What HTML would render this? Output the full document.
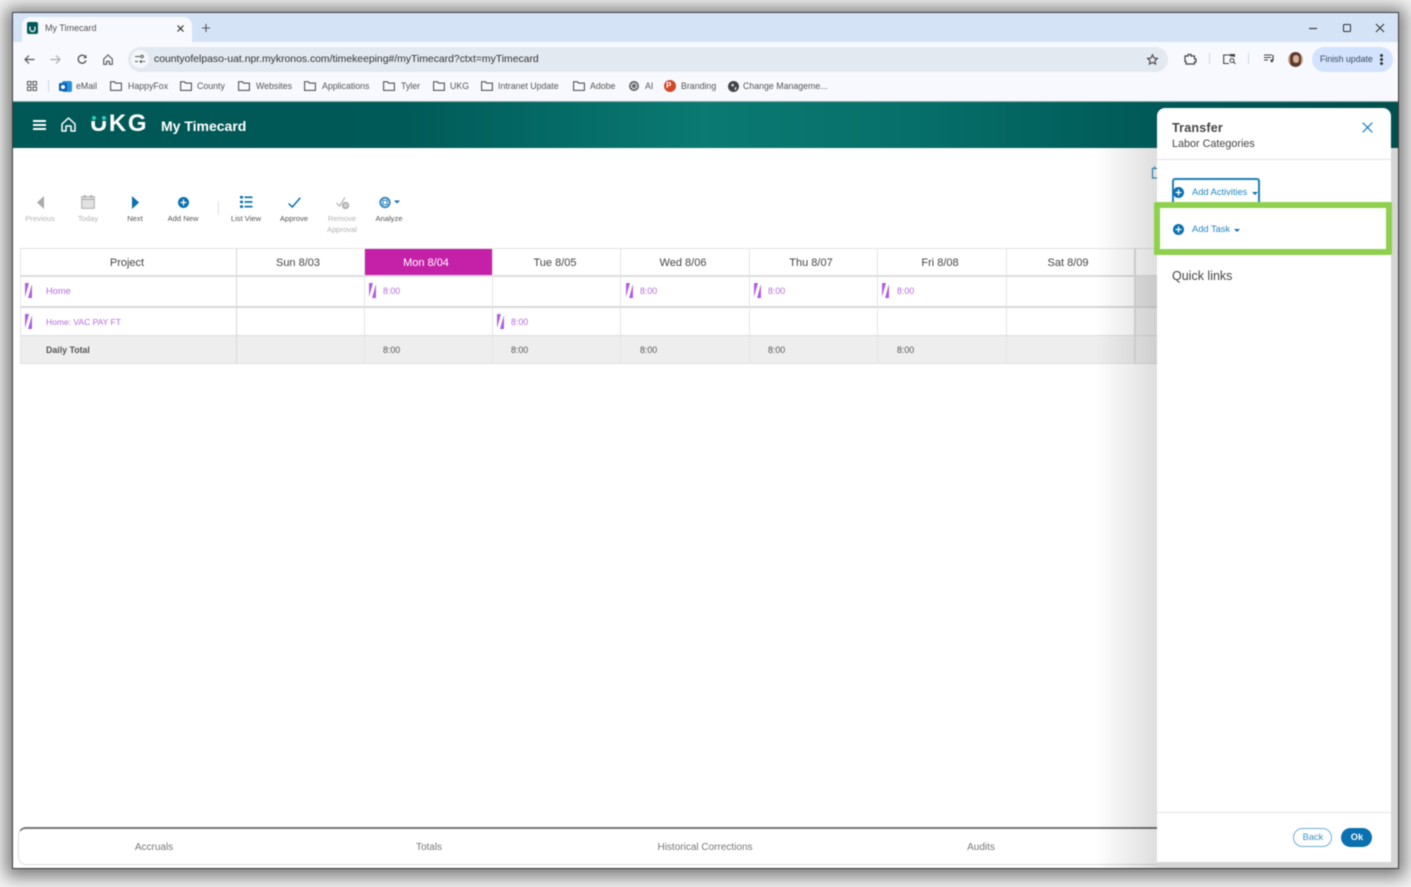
<!DOCTYPE html>
<html><head><meta charset="utf-8"><title>My Timecard</title>
<style>
html,body{margin:0;padding:0;width:1411px;height:887px;overflow:hidden;background:#f4f4f4;font-family:"Liberation Sans",sans-serif}
#win{position:absolute;left:13px;top:13px;width:1385px;height:855px;background:#fff;box-shadow:0 0 0 1px rgba(30,30,30,.75),0 2px 16px 7px rgba(0,0,0,.5);overflow:hidden}
#root{position:absolute;left:0;top:0;width:1411px;height:887px;filter:blur(.4px)}
.a{position:absolute}
.t{position:absolute;white-space:nowrap;line-height:14px;height:14px}
.c{transform:translateX(-50%)}
.bm{font-size:8.8px;color:#555;top:79px}
.tb{font-size:7.6px;color:#555;top:214px;line-height:10px;height:10px;text-align:center;transform:translateX(-50%)}
.dis{color:#b3b3b3}
.h{font-size:11px;color:#444;top:255.500px}
.p{font-size:8.8px;color:#b36be0}
.k{font-size:8.8px;color:#555;top:343px}
.v{background:#e4e4e4;width:1px}
svg{position:absolute;overflow:visible}
</style></head><body>
<div id="root">
<div id="win"></div>

<!-- Tab strip -->
<div class="a" style="left:13px;top:13px;width:1385px;height:29px;background:#d4e3f6"></div>
<div class="a" style="left:22px;top:17px;width:170px;height:25px;background:#f8f9fe;border-radius:8px 8px 0 0"></div>
<div class="a" style="left:27px;top:22px;width:11px;height:12px;background:#005a58;border-radius:2px"></div>
<svg style="left:27px;top:22px" width="11" height="12"><path d="M3 4.500v2.500a2.500 2.500 0 0 0 5 0V4.500" fill="none" stroke="#fff" stroke-width="1.200"/></svg>
<div class="t" style="left:45px;top:21px;font-size:9px;color:#555">My Timecard</div>
<svg style="left:177px;top:25px" width="7" height="7"><path d="M.5.500l6 6M6.500.500l-6 6" stroke="#333" stroke-width="1.200"/></svg>
<svg style="left:202px;top:24px" width="8" height="8"><path d="M4 0v8M0 4h8" stroke="#555" stroke-width="1.100"/></svg>
<svg style="left:1309px;top:28px" width="8" height="2"><path d="M0 .5h8" stroke="#333" stroke-width="1.100"/></svg>
<svg style="left:1343px;top:24px" width="8" height="8"><rect x=".5" y=".5" width="7" height="7" rx="1" fill="none" stroke="#333"/></svg>
<svg style="left:1376px;top:24px" width="8" height="8"><path d="M0 0l8 8M8 0l-8 8" stroke="#333" stroke-width="1"/></svg>

<!-- Toolbar -->
<div class="a" style="left:13px;top:42px;width:1385px;height:59px;background:#f8f9fe"></div>
<svg style="left:24px;top:54px" width="11" height="11"><path d="M10.500 5.500H1M5 1.500l-4 4 4 4" fill="none" stroke="#555" stroke-width="1.200"/></svg>
<svg style="left:50px;top:54px" width="11" height="11"><path d="M.5 5.500H10M6 1.500l4 4-4 4" fill="none" stroke="#aaa" stroke-width="1.200"/></svg>
<svg style="left:77px;top:54px" width="10" height="11"><path d="M8.700 3.200A4 4 0 1 0 9 6.500" fill="none" stroke="#555" stroke-width="1.300"/><path d="M9.500 .8v3.400H6.200z" fill="#555"/></svg>
<svg style="left:103px;top:54px" width="10" height="11"><path d="M.7 5L5 1l4.300 4v5.300H6.400V7.300H3.600v3H.7z" fill="none" stroke="#555" stroke-width="1.100"/></svg>
<div class="a" style="left:128px;top:47px;width:1040px;height:25px;background:#e3e9f0;border-radius:13px"></div>
<div class="a" style="left:131px;top:50px;width:18px;height:18px;background:#f4f7fa;border-radius:50%"></div>
<svg style="left:135px;top:55px" width="10" height="9"><path d="M0 1.500h5M0 6.500h3" stroke="#555" stroke-width="1"/><circle cx="7" cy="1.500" r="1.300" fill="none" stroke="#555"/><circle cx="6" cy="6.500" r="1.300" fill="#555"/><path d="M8 6.500h2" stroke="#555"/></svg>
<div class="t" style="left:154px;top:53px;font-size:10.400px;color:#333">countyofelpaso-uat.npr.mykronos.com/timekeeping#/myTimecard?ctxt=myTimecard</div>
<svg style="left:1147px;top:54px" width="11" height="11"><path d="M5.500 .8l1.500 3.200 3.400.4-2.500 2.300.7 3.400-3.100-1.700-3.100 1.700.7-3.400L.6 4.400 4 4z" fill="none" stroke="#444" stroke-width="1.100"/></svg>
<svg style="left:1184px;top:53px" width="12" height="12"><path d="M1 3h3V1.500h3V3h3.500v3H12v3h-1.500v2H2V8.500H1z" fill="none" stroke="#444" stroke-width="1.200"/></svg>
<div class="a" style="left:1209px;top:53px;width:1px;height:11px;background:#cbd8e6"></div>
<svg style="left:1223px;top:54px" width="13" height="11"><path d="M6 9.500H.7V1h10.500v2" fill="none" stroke="#444" stroke-width="1.100"/><rect x="7" y="0" width="5" height="2.500" fill="#444"/><circle cx="9" cy="6.500" r="2" fill="none" stroke="#444"/><path d="M10.500 8l2 2" stroke="#444"/></svg>
<div class="a" style="left:1248px;top:53px;width:1px;height:11px;background:#cbd8e6"></div>
<svg style="left:1264px;top:54px" width="11" height="9"><path d="M0 1h8M0 3.500h7M0 6h4" stroke="#444" stroke-width="1"/><path d="M9 1v5.500" stroke="#444" stroke-width="1.200"/><circle cx="7.800" cy="6.800" r="1.400" fill="#444"/></svg>
<div class="a" style="left:1288px;top:52px;width:15px;height:15px;border-radius:50%;background:#c9a48c;overflow:hidden"><div class="a" style="left:2px;top:0;width:11px;height:15px;background:#5a3a2e;border-radius:5px"></div><div class="a" style="left:4.500px;top:3px;width:6px;height:8px;background:#d7ae96;border-radius:3px"></div></div>
<div class="a" style="left:1312px;top:47px;width:81px;height:25px;background:#d3e3fd;border-radius:13px"></div>
<div class="t" style="left:1320px;top:52px;font-size:8.800px;color:#3c4a5a">Finish update</div>
<div class="a" style="left:1380px;top:54px;width:3px;height:3px;border-radius:50%;background:#333;box-shadow:0 4px 0 #333,0 8px 0 #333"></div>

<!-- Bookmarks -->
<svg style="left:27px;top:81px" width="10" height="10"><g fill="none" stroke="#555"><rect x=".5" y=".5" width="3.500" height="3.500"/><rect x="6" y=".5" width="3.500" height="3.500"/><rect x=".5" y="6" width="3.500" height="3.500"/><rect x="6" y="6" width="3.500" height="3.500"/></g></svg>
<div class="a" style="left:48px;top:80px;width:1px;height:12px;background:#cbd8e6"></div>
<div class="a" style="left:62px;top:81px;width:10px;height:11px;background:#2a8fdc;border-radius:2px"></div>
<div class="a" style="left:59px;top:83px;width:8px;height:8px;background:#0f5fae;border-radius:1px"></div>
<div class="a" style="left:61px;top:85px;width:4px;height:4px;background:#fff;border-radius:50%"></div>
<div class="t bm" style="left:76px">eMail</div>
<svg style="left:110px;top:81px" width="12" height="10"><path d="M.6 9.400V.8h3.900l1 1.300h5.900v7.300z" fill="none" stroke="#444" stroke-width="1"/></svg>
<div class="t bm" style="left:128px">HappyFox</div>
<svg style="left:180px;top:81px" width="12" height="10"><path d="M.6 9.400V.8h3.900l1 1.300h5.900v7.300z" fill="none" stroke="#444" stroke-width="1"/></svg>
<div class="t bm" style="left:197px">County</div>
<svg style="left:238px;top:81px" width="12" height="10"><path d="M.6 9.400V.8h3.900l1 1.300h5.900v7.300z" fill="none" stroke="#444" stroke-width="1"/></svg>
<div class="t bm" style="left:256px">Websites</div>
<svg style="left:304px;top:81px" width="12" height="10"><path d="M.6 9.400V.8h3.900l1 1.300h5.900v7.300z" fill="none" stroke="#444" stroke-width="1"/></svg>
<div class="t bm" style="left:322px">Applications</div>
<svg style="left:383px;top:81px" width="12" height="10"><path d="M.6 9.400V.8h3.900l1 1.300h5.900v7.300z" fill="none" stroke="#444" stroke-width="1"/></svg>
<div class="t bm" style="left:401px">Tyler</div>
<svg style="left:433px;top:81px" width="12" height="10"><path d="M.6 9.400V.8h3.900l1 1.300h5.900v7.300z" fill="none" stroke="#444" stroke-width="1"/></svg>
<div class="t bm" style="left:450px">UKG</div>
<svg style="left:481px;top:81px" width="12" height="10"><path d="M.6 9.400V.8h3.900l1 1.300h5.900v7.300z" fill="none" stroke="#444" stroke-width="1"/></svg>
<div class="t bm" style="left:498px">Intranet Update</div>
<svg style="left:573px;top:81px" width="12" height="10"><path d="M.6 9.400V.8h3.900l1 1.300h5.900v7.300z" fill="none" stroke="#444" stroke-width="1"/></svg>
<div class="t bm" style="left:590px">Adobe</div>
<svg style="left:629px;top:81px" width="10" height="10"><circle cx="5" cy="5" r="4.300" fill="none" stroke="#555" stroke-width="1.300"/><path d="M1 5h8M5 1v8M2.200 2.200l5.600 5.600M7.800 2.200L2.200 7.800" stroke="#555" stroke-width=".8"/></svg>
<div class="t bm" style="left:645px">AI</div>
<div class="a" style="left:664px;top:80px;width:12px;height:12px;border-radius:50%;background:#d24726"></div>
<div class="t" style="left:666px;top:79px;font-size:8px;font-weight:bold;color:#fff">P</div>
<div class="t bm" style="left:681px">Branding</div>
<div class="a" style="left:728px;top:81px;width:11px;height:11px;border-radius:50%;background:#444"></div>
<svg style="left:728px;top:81px" width="11" height="11"><path d="M5 2.500L3 4l1.500 1.500L6 5zM7 6.500l1.500-.5-.5 2.500-1.500.5z" fill="#eef"/></svg>
<div class="t bm" style="left:743px">Change Manageme...</div>

<!-- App header -->
<div class="a" style="left:13px;top:101px;width:1385px;height:47px;background:linear-gradient(90deg,#005856 0%,#005a58 28%,#0a7a72 50%,#076f69 65%,#005a58 82%,#004f4c 100%);border-top:1px solid #8fa9a8;box-sizing:border-box"></div>
<div class="a" style="left:33px;top:120px;width:13px;height:1.500px;background:#fff;box-shadow:0 4px 0 #fff,0 8px 0 #fff"></div>
<svg style="left:61px;top:117px" width="15" height="15"><path d="M1 7L7.500 1 14 7v7H10V9H5v5H1z" fill="none" stroke="#fff" stroke-width="1.500" stroke-linejoin="round"/></svg>
<div class="t" style="left:90px;top:110px;height:28px;line-height:28px;font-size:24px;font-weight:bold;color:#fff;letter-spacing:1.600px">UKG</div>
<div class="a" style="left:90px;top:112px;width:18px;height:9px;background:#005a58"></div>
<div class="a" style="left:92px;top:116px;width:4px;height:4px;border-radius:50%;background:#2fd0bf"></div>
<div class="a" style="left:102px;top:116px;width:4px;height:4px;border-radius:50%;background:#2fd0bf"></div>
<div class="t" style="left:161px;top:116.500px;height:18px;line-height:18px;font-size:14px;font-weight:bold;color:#fff">My Timecard</div>

<!-- Toolbar in app -->
<svg style="left:37px;top:196px" width="8" height="13"><path d="M7 0v13L0 6.500z" fill="#aaa"/></svg>
<div class="t tb dis" style="left:40px">Previous</div>
<svg style="left:81px;top:195px" width="14" height="14"><rect x=".7" y="1.700" width="12.600" height="11.600" fill="#e2e2e2" stroke="#aaa"/><rect x="3" y="0" width="1.500" height="3" fill="#aaa"/><rect x="9.500" y="0" width="1.500" height="3" fill="#aaa"/><path d="M.7 4.500h12.600" stroke="#aaa"/></svg>
<div class="t tb dis" style="left:88px">Today</div>
<svg style="left:132px;top:196px" width="7" height="13"><path d="M0 0v13L7 6.500z" fill="#0a70b0"/></svg>
<div class="t tb" style="left:135px">Next</div>
<svg style="left:178px;top:197px" width="11" height="11"><circle cx="5.500" cy="5.500" r="5.500" fill="#0a70b0"/><path d="M5.500 2.500v6M2.500 5.500h6" stroke="#fff" stroke-width="1.300"/></svg>
<div class="t tb" style="left:183px">Add New</div>
<div class="a" style="left:218px;top:201px;width:1px;height:14px;background:#ddd"></div>
<svg style="left:240px;top:196px" width="13" height="12"><g fill="#0a70b0"><rect x="0" y="0" width="3" height="2.500"/><rect x="0" y="4.700" width="3" height="2.500"/><rect x="0" y="9.400" width="3" height="2.500"/><rect x="4.500" y=".4" width="8" height="1.700"/><rect x="4.500" y="5.100" width="8" height="1.700"/><rect x="4.500" y="9.800" width="8" height="1.700"/></g></svg>
<div class="t tb" style="left:246px">List View</div>
<svg style="left:288px;top:197px" width="13" height="11"><path d="M.7 6.500l3.600 3.500L12.300.7" fill="none" stroke="#0a70b0" stroke-width="1.500"/></svg>
<div class="t tb" style="left:294px">Approve</div>
<svg style="left:336px;top:197px" width="13" height="12"><path d="M.5 6l3 3L9 .5" fill="none" stroke="#aaa" stroke-width="1.100"/><circle cx="9.500" cy="8.500" r="3" fill="#ccc" stroke="#999"/></svg>
<div class="t tb dis" style="left:342px;height:20px;top:214px;white-space:normal;width:40px;line-height:10.500px">Remove Approval</div>
<svg style="left:379px;top:196px" width="22" height="13"><circle cx="6" cy="6.500" r="4.700" fill="none" stroke="#3d8cc0" stroke-width="2"/><circle cx="6" cy="6.500" r="2.200" fill="none" stroke="#3d8cc0" stroke-width="1.200"/><path d="M2.500 3l2 2M9.500 3l-2 2M2.500 10l2-2M9.500 10l-2-2" stroke="#3d8cc0" stroke-width="1"/><path d="M15 4.500h6L18 7.500z" fill="#0a70b0"/></svg>
<div class="t tb" style="left:389px">Analyze</div>

<!-- Table -->
<div class="a" style="left:20px;top:248px;width:1137px;height:1px;background:#e4e4e4"></div>
<div class="a" style="left:20px;top:275px;width:1137px;height:2px;background:#dedede"></div>
<div class="a" style="left:1135px;top:276px;width:22px;height:30px;background:#e8e8e8"></div>
<div class="a" style="left:1135px;top:308px;width:22px;height:27px;background:#f0f0f0"></div>
<div class="a" style="left:20px;top:306px;width:1137px;height:2px;background:#d8d8d8"></div>
<div class="a" style="left:20px;top:335px;width:1137px;height:29px;background:#eee;border-top:1px solid #ddd;border-bottom:1px solid #e0e0e0;box-sizing:border-box"></div>
<div class="a v" style="left:20px;top:248px;height:116px"></div>
<div class="a v" style="left:236px;top:248px;height:116px;background:#d8d8d8"></div>
<div class="a v" style="left:364px;top:248px;height:116px"></div>
<div class="a v" style="left:492px;top:248px;height:116px"></div>
<div class="a v" style="left:620px;top:248px;height:116px"></div>
<div class="a v" style="left:749px;top:248px;height:116px"></div>
<div class="a v" style="left:877px;top:248px;height:116px"></div>
<div class="a v" style="left:1006px;top:248px;height:116px"></div>
<div class="a v" style="left:1134px;top:248px;height:116px;width:2px;background:#ddd"></div>
<div class="a" style="left:365px;top:249px;width:127px;height:26px;background:#c420a8"></div>
<div class="t h c" style="left:127px">Project</div>
<div class="t h c" style="left:298px">Sun 8/03</div>
<div class="t h c" style="left:426px;color:#fff">Mon 8/04</div>
<div class="t h c" style="left:555px">Tue 8/05</div>
<div class="t h c" style="left:683px">Wed 8/06</div>
<div class="t h c" style="left:811px">Thu 8/07</div>
<div class="t h c" style="left:940px">Fri 8/08</div>
<div class="t h c" style="left:1068px">Sat 8/09</div>

<!-- Markers -->
<svg style="left:25px;top:283px" width="7" height="15"><path d="M0 0h4L0 14zM7 1v14H3z" fill="#b05ee0"/></svg>
<div class="t p" style="left:46px;top:284px;font-size:9.300px">Home</div>
<svg style="left:369px;top:283px" width="7" height="15"><path d="M0 0h4L0 14zM7 1v14H3z" fill="#b05ee0"/></svg>
<div class="t p" style="left:383px;top:284px">8:00</div>
<svg style="left:626px;top:283px" width="7" height="15"><path d="M0 0h4L0 14zM7 1v14H3z" fill="#b05ee0"/></svg>
<div class="t p" style="left:640px;top:284px">8:00</div>
<svg style="left:754px;top:283px" width="7" height="15"><path d="M0 0h4L0 14zM7 1v14H3z" fill="#b05ee0"/></svg>
<div class="t p" style="left:768px;top:284px">8:00</div>
<svg style="left:882px;top:283px" width="7" height="15"><path d="M0 0h4L0 14zM7 1v14H3z" fill="#b05ee0"/></svg>
<div class="t p" style="left:897px;top:284px">8:00</div>
<svg style="left:25px;top:314px" width="7" height="15"><path d="M0 0h4L0 14zM7 1v14H3z" fill="#b05ee0"/></svg>
<div class="t p" style="left:46px;top:315px;font-size:8.500px">Home: VAC PAY FT</div>
<svg style="left:497px;top:314px" width="7" height="15"><path d="M0 0h4L0 14zM7 1v14H3z" fill="#b05ee0"/></svg>
<div class="t p" style="left:511px;top:315px">8:00</div>
<div class="t k" style="left:46px;font-weight:bold">Daily Total</div>
<div class="t k" style="left:383px">8:00</div>
<div class="t k" style="left:511px">8:00</div>
<div class="t k" style="left:640px">8:00</div>
<div class="t k" style="left:768px">8:00</div>
<div class="t k" style="left:897px">8:00</div>

<!-- Bottom tabs -->
<div class="a" style="left:18px;top:827px;width:1150px;height:38px;border:1px solid #ddd;border-top:2px solid #777;border-radius:8px 0 0 8px;box-sizing:border-box"></div>
<div class="t c" style="left:154px;top:840.500px;font-size:10px;color:#777">Accruals</div>
<div class="t c" style="left:429px;top:840.500px;font-size:10px;color:#777">Totals</div>
<div class="t c" style="left:705px;top:840.500px;font-size:10px;color:#777">Historical Corrections</div>
<div class="t c" style="left:981px;top:840.500px;font-size:10px;color:#777">Audits</div>

<!-- Panel shading -->
<div class="a" style="left:1095px;top:148px;width:62px;height:720px;background:linear-gradient(90deg,rgba(0,0,0,0),rgba(0,0,0,.13))"></div>
<div class="a" style="left:1391px;top:148px;width:7px;height:720px;background:#d6d6d6"></div>
<div class="a" style="left:1157px;top:862px;width:241px;height:6px;background:#d6d6d6"></div>
<svg style="left:1151px;top:166px" width="6" height="13"><path d="M6 2.500H1.500V12H6M3.500 .5v2" fill="none" stroke="#2c7fb0" stroke-width="1.200"/></svg>

<!-- Panel -->
<div class="a" style="left:1157px;top:108px;width:234px;height:754px;background:#fff;border-radius:8px"></div>
<div class="t" style="left:1172px;top:121px;font-size:12.500px;font-weight:bold;color:#444;letter-spacing:.2px">Transfer</div>
<div class="t" style="left:1172px;top:136.500px;font-size:10.800px;color:#444">Labor Categories</div>
<svg style="left:1362px;top:122px" width="11" height="11"><path d="M.7.700l9.600 9.600M10.300.700L.7 10.300" stroke="#1f87c0" stroke-width="1.300"/></svg>
<div class="a" style="left:1157px;top:159px;width:234px;height:1px;background:#e2e2e2"></div>
<div class="a" style="left:1172px;top:178px;width:88px;height:26px;border:2px solid #1f7fb8;border-bottom:0;border-radius:3px 3px 0 0;box-sizing:border-box"></div>
<svg style="left:1173px;top:187px" width="11" height="11"><circle cx="5.500" cy="5.500" r="5.500" fill="#0a70b0"/><path d="M5.500 2.500v6M2.500 5.500h6" stroke="#fff" stroke-width="1.300"/></svg>
<div class="t" style="left:1192px;top:185px;font-size:9.300px;color:#1f87c0">Add Activities</div>
<svg style="left:1252px;top:192px" width="6" height="3"><path d="M0 0h6L3 3z" fill="#0a70b0"/></svg>

<!-- Green highlight -->
<div class="a" style="left:1154px;top:202px;width:238px;height:53px;border:6px solid #8fd14f;border-radius:2px;box-sizing:border-box;background:#fff"></div>
<svg style="left:1173px;top:224px" width="11" height="11"><circle cx="5.500" cy="5.500" r="5.500" fill="#0a70b0"/><path d="M5.500 2.500v6M2.500 5.500h6" stroke="#fff" stroke-width="1.300"/></svg>
<div class="t" style="left:1192px;top:222px;font-size:9.300px;color:#1f87c0">Add Task</div>
<svg style="left:1234px;top:229px" width="6" height="3"><path d="M0 0h6L3 3z" fill="#0a70b0"/></svg>

<div class="t" style="left:1172px;top:269px;font-size:12.500px;color:#444">Quick links</div>
<div class="a" style="left:1157px;top:812px;width:234px;height:1px;background:#e6e6e6"></div>
<div class="a" style="left:1293px;top:828px;width:39px;height:19px;border:1px solid #6fb0d6;border-radius:10px;box-sizing:border-box"></div>
<div class="t c" style="left:1313px;top:830px;font-size:9.300px;color:#3f92c4">Back</div>
<div class="a" style="left:1341px;top:828px;width:31px;height:19px;background:#0a70b0;border-radius:10px"></div>
<div class="t c" style="left:1357px;top:830px;font-size:9.300px;font-weight:bold;color:#fff">Ok</div>
</div>
</body></html>
